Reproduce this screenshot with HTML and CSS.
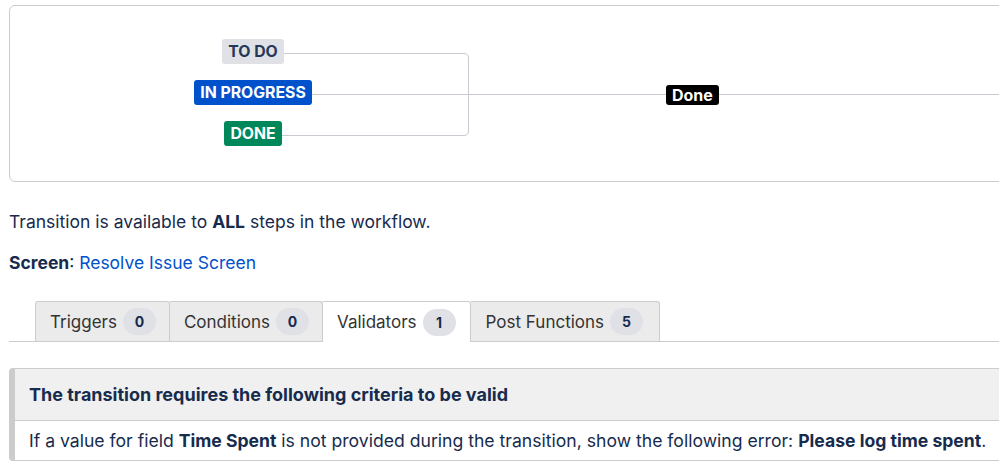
FILE: index.html
```html
<!DOCTYPE html>
<html>
<head>
<meta charset="utf-8">
<link rel="stylesheet" href="styles.css">
</head>
<body>
<div class="page">
  <div class="diagram">
    <svg class="lines" width="1000" height="176" viewBox="0 0 1000 176">
      <path d="M273 47.5 H454 Q458.5 47.5 458.5 52 V125 Q458.5 129.5 454 129.5 H271" fill="none" stroke="#c8ccd2" stroke-width="1"/>
      <path d="M302 88.5 H1000" fill="none" stroke="#c8ccd2" stroke-width="1"/>
    </svg>
    <div class="statuses">
      <span class="lozenge todo">TO DO</span>
      <span class="lozenge progress">IN PROGRESS</span>
      <span class="lozenge done">DONE</span>
    </div>
    <span class="transition-label">Done</span>
  </div>

  <p class="info">Transition is available to <b>ALL</b> steps in the workflow.</p>
  <p class="info screen"><b>Screen</b>: <a href="#">Resolve Issue Screen</a></p>

  <div class="tabs">
    <div class="tab">Triggers <span class="badge">0</span></div>
    <div class="tab">Conditions <span class="badge">0</span></div>
    <div class="tab active">Validators <span class="badge">1</span></div>
    <div class="tab wide">Post Functions <span class="badge">5</span></div>
  </div>

  <div class="panel">
    <div class="panel-head">The transition requires the following criteria to be valid</div>
    <div class="panel-body">If a value for field <b>Time Spent</b> is not provided during the transition, show the following error: <b>Please log time spent</b>.</div>
  </div>
</div>
</body>
</html>
```

FILE: styles.css
```css
html, body {
  margin: 0;
  padding: 0;
  background: #fff;
  overflow: hidden;
}
body {
  font-family: Inter, "Liberation Sans", Arial, sans-serif;
  color: #172b4d;
}
.page {
  padding: 5px 0 0 9px;
  width: 1010px;
}
.diagram {
  position: relative;
  height: 175px;
  border: 1px solid #ccc;
  border-radius: 6px;
  box-sizing: content-box;
}
.lines {
  position: absolute;
  left: 0;
  top: 0;
}
.statuses {
  position: absolute;
  left: 143px;
  top: 33px;
  width: 200px;
  display: flex;
  flex-direction: column;
  align-items: center;
  gap: 16px;
}
.lozenge {
  display: inline-block;
  height: 25px;
  line-height: 25px;
  padding: 0 6px;
  border-radius: 3px;
  font-size: 15.8px;
  font-weight: 700;
  letter-spacing: 0;
}
.todo { background: #dfe1e6; color: #253858; }
.progress { background: #0052cc; color: #fff; }
.done { background: #00875a; color: #fff; }
.transition-label {
  position: absolute;
  left: 656px;
  top: 79px;
  height: 20px;
  line-height: 20px;
  padding: 0 6px;
  background: #000;
  color: #fff;
  border-radius: 3px;
  font-size: 16px;
  font-weight: 700;
}
.info {
  margin: 0;
  font-size: 17.5px;
  line-height: 24px;
}
.info:first-of-type { margin-top: 28px; }
.screen { margin-top: 17px; }
.info a { color: #0052cc; text-decoration: none; }
.tabs {
  display: flex;
  margin-top: 26px;
  padding-left: 26px;
  border-bottom: 1px solid #ccc;
  height: 40px;
}
.tab {
  display: flex;
  align-items: center;
  gap: 6px;
  height: 39px;
  padding: 0 13px 0 14px;
  background: #ebebeb;
  border: 1px solid #ccc;
  border-bottom: none;
  border-left: none;
  border-radius: 0 3px 0 0;
  font-size: 17px;
  color: #333;
}
.tab.active { padding-right: 14px; }
.tab.wide { padding: 0 16px 0 15px; }
.tab:first-child { border-left: 1px solid #ccc; border-radius: 3px 3px 0 0; }
.tab.active {
  background: #fff;
  height: 40px;
  margin-bottom: -1px;
}
.badge {
  display: inline-flex;
  align-items: center;
  justify-content: center;
  min-width: 33px;
  height: 27px;
  box-sizing: border-box;
  border-radius: 14px;
  background: #dfe1e6;
  color: #172b4d;
  font-size: 14px;
  font-weight: 700;
}
.panel {
  margin-top: 26px;
  border: 1px solid #ccc;
  border-left: 6px solid #ccc;
  border-right: none;
  border-radius: 4px 0 0 4px;
}
.panel-head {
  background: #f0f0f0;
  height: 51px;
  line-height: 51px;
  padding-left: 14px;
  font-size: 18px;
  font-weight: 700;
  border-bottom: 1px solid #ccc;
}
.panel-body {
  height: 39px;
  line-height: 39px;
  padding-left: 14px;
  font-size: 17.6px;
}
```
